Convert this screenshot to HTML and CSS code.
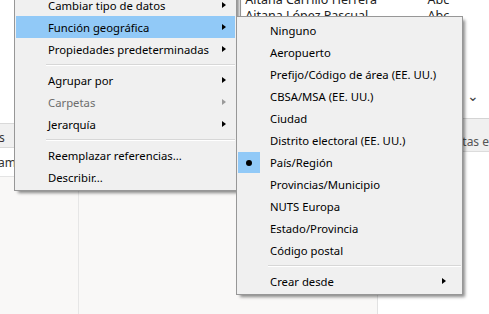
FILE: index.html
```html
<!DOCTYPE html>
<html>
<head>
<meta charset="utf-8">
<link rel="stylesheet" href="styles.css">
</head>
<body>
<div class="bg">
  <div class="bg-left">
    <div class="bl-top"></div>
    <div class="bl-strip"><span>s</span></div>
    <div class="bl-row"><span>ami</span></div>
    <div class="bl-bottom"><div class="col-a"></div><div class="col-b"></div></div>
  </div>
  <div class="bg-right">
    <div class="br-main">
      <div class="table">
        <div class="trow"><span>Aitana Carrillo Herrera</span><span>Abc</span></div>
        <div class="trow"><span>Aitana López Pascual</span><span>Abc</span></div>
      </div>
      <div class="br-fill"><div class="fill-a"></div><div class="fill-b"></div></div>
    </div>
    <div class="rside">
      <div class="rs-top"><span class="chev">⌄</span></div>
      <div class="rs-strip"><span>itas e</span></div>
      <div class="rs-bottom"></div>
    </div>
  </div>
</div>

<div class="menu main-menu">
  <div class="item"><span>Cambiar tipo de datos</span><i class="arrow"></i></div>
  <div class="item hl"><span>Función geográfica</span><i class="arrow"></i></div>
  <div class="item"><span>Propiedades predeterminadas</span><i class="arrow"></i></div>
  <div class="sep"></div>
  <div class="item"><span>Agrupar por</span><i class="arrow"></i></div>
  <div class="item disabled"><span>Carpetas</span><i class="arrow"></i></div>
  <div class="item"><span>Jerarquía</span><i class="arrow"></i></div>
  <div class="sep"></div>
  <div class="item"><span>Reemplazar referencias...</span></div>
  <div class="item"><span>Describir...</span></div>
</div>

<div class="menu sub-menu">
  <div class="item"><span>Ninguno</span></div>
  <div class="item"><span>Aeropuerto</span></div>
  <div class="item"><span>Prefijo/Código de área (EE. UU.)</span></div>
  <div class="item"><span>CBSA/MSA (EE. UU.)</span></div>
  <div class="item"><span>Ciudad</span></div>
  <div class="item"><span>Distrito electoral (EE. UU.)</span></div>
  <div class="item checked"><b class="radio"><i class="dot"></i></b><span>País/Región</span></div>
  <div class="item"><span>Provincias/Municipio</span></div>
  <div class="item"><span>NUTS Europa</span></div>
  <div class="item"><span>Estado/Provincia</span></div>
  <div class="item"><span>Código postal</span></div>
  <div class="sep"></div>
  <div class="item"><span>Crear desde</span><i class="arrow"></i></div>
</div>
</body>
</html>
```
FILE: styles.css
```css
html, body {
  margin: 0;
  padding: 0;
}
body {
  width: 489px;
  height: 314px;
  overflow: hidden;
  position: relative;
  background: #f9f8f7;
  font-family: "Noto Sans", "Open Sans", sans-serif;
  font-size: 11.3px;
  color: #000;
}
.bg {
  display: flex;
  height: 314px;
}
.bg-left {
  width: 241px;
  display: flex;
  flex-direction: column;
}
.bl-top {
  height: 123px;
  background: #fff;
}
.bl-strip {
  height: 25px;
  background: #f0f0f0;
  border-top: 1px solid #d9d9d9;
  border-bottom: 1px solid #d9d9d9;
  box-sizing: border-box;
  display: flex;
  align-items: flex-end;
  color: #333;
  font-size: 12px;
}
.bl-strip span { margin-left: -1px; padding-bottom: 1px; }
.bl-row {
  height: 28px;
  background: #fff;
  border-bottom: 1px solid #e4e4e4;
  display: flex;
  align-items: center;
  color: #333;
  font-size: 12px;
}
.bl-row span { margin-left: -2px; }
.bl-bottom {
  flex: 1;
  display: flex;
}
.col-a {
  width: 78px;
  border-right: 1px solid #e6e6e6;
}
.col-b { flex: 1; }

.bg-right {
  flex: 1;
  display: flex;
}
.br-main {
  width: 221px;
  display: flex;
  flex-direction: column;
}
.table {
  background: #fff;
  border-left: 1px solid #a0a0a0;
  padding-left: 4px;
  font-size: 12.5px;
  height: 24px;
  margin-top: -8px;
}
.trow {
  height: 16px;
  line-height: 16px;
  display: flex;
  justify-content: space-between;
  padding-right: 12px;
  color: #222;
  white-space: nowrap;
}
.br-fill {
  flex: 1;
  display: flex;
}
.fill-a {
  width: 137px;
  border-right: 1px solid #e2e2e2;
}
.fill-b { flex: 1; background: #fff; }

.rside {
  flex: 1;
  display: flex;
  flex-direction: column;
}
.rs-top {
  height: 118px;
  background: #fff;
  position: relative;
}
.chev {
  position: absolute;
  left: 6px;
  top: 86px;
  color: #444;
  font-size: 14px;
}
.rs-strip {
  height: 32px;
  background: #f0f0f0;
  border-top: 1px solid #d4d4d4;
  border-bottom: 1px solid #dcdcdc;
  display: flex;
  align-items: flex-end;
  color: #555;
  font-size: 12px;
  white-space: nowrap;
  overflow: hidden;
}
.rs-strip span { margin-left: -2px; padding-bottom: 1px; }
.rs-bottom { flex: 1; background: #fff; }

/* menus */
.menu {
  position: absolute;
  background: #f0f0f0;
  border: 1px solid #979797;
  box-sizing: border-box;
  box-shadow: 3px 3px 3px -1px rgba(0,0,0,0.45);
  padding: 2px 1px;
}
.main-menu {
  left: 14px;
  top: -9px;
  width: 223px;
  height: 200px;
}
.sub-menu {
  left: 236px;
  top: 16px;
  width: 227px;
  height: 279px;
}
.item {
  height: 22px;
  display: flex;
  align-items: center;
  padding-left: 32px;
  position: relative;
  white-space: nowrap;
}
.item.hl { background: #91c9f7; }
.item.disabled { color: #6d6d6d; }
.arrow {
  position: absolute;
  right: 9px;
  top: 8px;
  width: 0;
  height: 0;
  border-top: 3.5px solid transparent;
  border-bottom: 3.5px solid transparent;
  border-left: 4px solid #000;
}
.item.disabled .arrow { border-left-color: #9a9a9a; }
.sub-menu .arrow { right: 15px; }
.sep {
  height: 9px;
  margin-left: 30px;
  background: linear-gradient(#d7d7d7, #d7d7d7) no-repeat 0 4px / 100% 1px,
              linear-gradient(#fff, #fff) no-repeat 0 5px / 100% 1px;
}
.radio {
  position: absolute;
  left: 0;
  top: 1px;
  width: 22px;
  height: 21px;
  background: #91c9f7;
  display: flex;
  align-items: center;
  justify-content: center;
}
.dot {
  width: 6px;
  height: 6px;
  border-radius: 50%;
  background: #000;
}
```
